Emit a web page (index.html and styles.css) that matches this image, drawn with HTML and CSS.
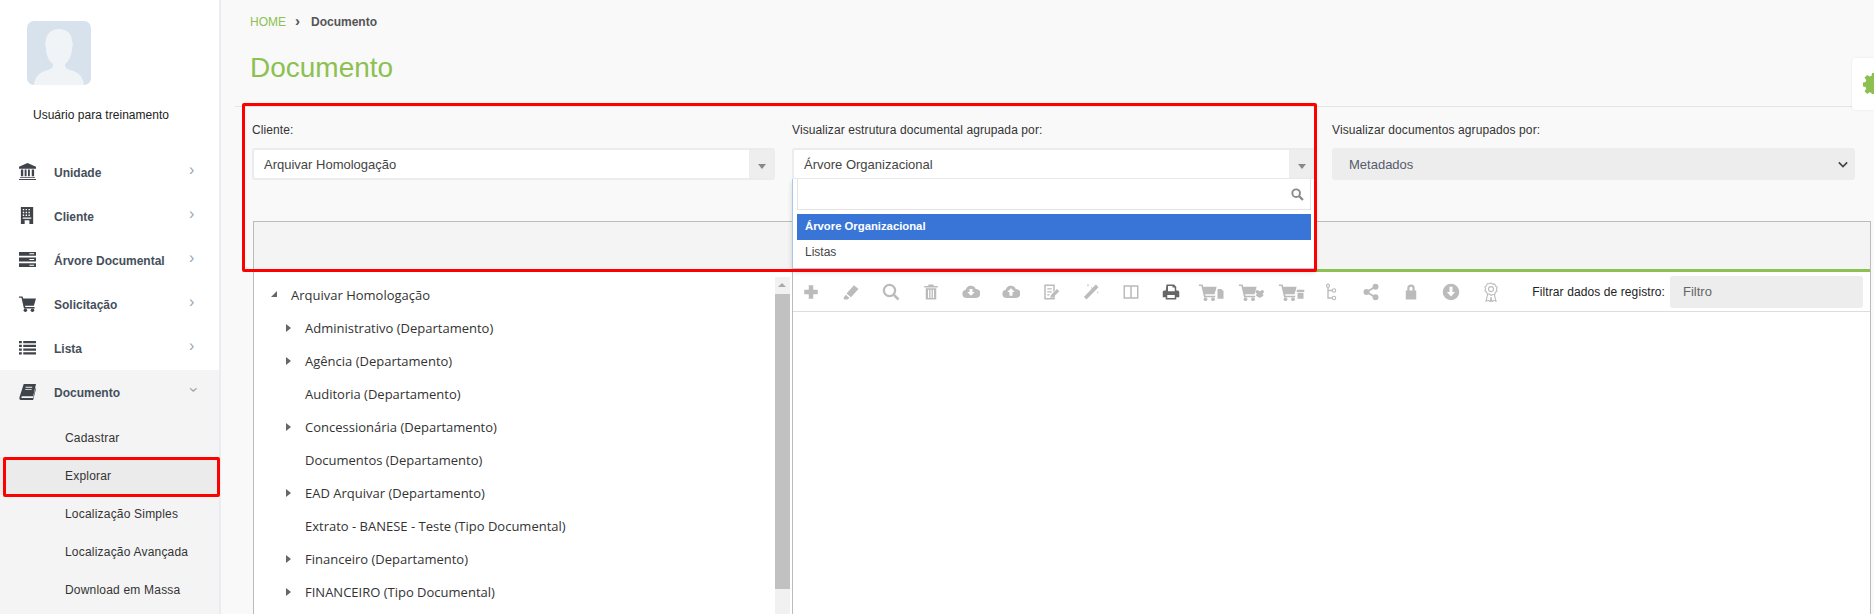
FILE: index.html
```html
<!DOCTYPE html>
<html lang="pt-BR">
<head>
    <meta charset="UTF-8">
    <title>Documento</title>
    <link rel="stylesheet" href="styles.css">
</head>
<body>
<svg class="defs" width="0" height="0">
    <symbol id="cart" viewBox="0 0 24 24">
        <path d="M0 2h5l1 3h18l-3 10H8.500l.5 2h13v2H7L3.500 4H0z"/>
        <circle cx="9" cy="21.500" r="2.500"/><circle cx="19" cy="21.500" r="2.500"/>
    </symbol>
</svg>
<div class="app">
    <aside class="sidebar">
        <div class="avatar">
            <svg viewBox="0 0 64 64" width="64" height="64">
                <path class="avatar-person" d="M7 64c1-9 6-13 14-15 4-1 5-3 5-6-4-3-7-9-7-16-1-2-1-5 0-7 0-7 5-12 13-12s13 5 13 12c1 2 1 5 0 7 0 7-3 13-7 16 0 3 1 5 5 6 8 2 13 6 14 15z"/>
            </svg>
        </div>
        <p class="user-name">Usuário para treinamento</p>
        <ul class="menu">
            <li class="menu-item">
                <svg class="menu-icon" viewBox="0 0 18 18"><path d="M9 0l9 4v2H0V4zM2 7h2.500v7H2zm4 0h2v7H6zm3.500 0h2v7h-2zM13.500 7H16v7h-2.500zM1 15h16v1H1zM0 17h18v1H0z"/></svg>
                <span class="menu-label">Unidade</span><span class="chev">&#8250;</span>
            </li>
            <li class="menu-item">
                <svg class="menu-icon" viewBox="0 0 18 18"><path fill-rule="evenodd" d="M2 0h13v18H2zm2 2v1.500h1.500V2zm3 0v1.500h1.500V2zm3 0v1.500h1.500V2zM4 5v1.500h1.500V5zm3 0v1.500h1.500V5zm3 0v1.500h1.500V5zM4 8v1.500h1.500V8zm3 0v1.500h1.500V8zm3 0v1.500h1.500V8zM4 11v1.500h9V11zM6 14v4h5v-4z"/></svg>
                <span class="menu-label">Cliente</span><span class="chev">&#8250;</span>
            </li>
            <li class="menu-item">
                <svg class="menu-icon" viewBox="0 0 18 18"><path fill-rule="evenodd" d="M0 1h18v4H0zm0 6h18v4H0zm0 6h18v4H0zm11-10.500v1h5v-1zm0 6v1h5v-1zm0 6v1h5v-1z"/></svg>
                <span class="menu-label">Árvore Documental</span><span class="chev">&#8250;</span>
            </li>
            <li class="menu-item">
                <svg class="menu-icon" viewBox="0 0 24 24"><use href="#cart"/></svg>
                <span class="menu-label">Solicitação</span><span class="chev">&#8250;</span>
            </li>
            <li class="menu-item">
                <svg class="menu-icon" viewBox="0 0 18 18"><path d="M0 2h3v2.500H0zm4.500 0H18v2.500H4.500zM0 6h3v2.500H0zm4.500 0H18v2.500H4.500zM0 10h3v2.500H0zm4.500 0H18v2.500H4.500zM0 14h3v2.500H0zm4.500 0H18v2.500H4.500z"/></svg>
                <span class="menu-label">Lista</span><span class="chev">&#8250;</span>
            </li>
            <li class="menu-group">
                <div class="menu-item">
                    <svg class="menu-icon" viewBox="0 0 18 18"><path fill-rule="evenodd" d="M5 1h13l-3 13H4c-1 0-1.500.5-1.500 1S3 16 4 16h11l2.500-11 .5 1-3 12H3c-2 0-3-1-2.500-3zm2 3v1h7V4zm-.5 2.500v1h7v-1z"/></svg>
                    <span class="menu-label">Documento</span><span class="chev chev-open">&#8250;</span>
                </div>
                <a class="sub-item">Cadastrar</a>
                <a class="sub-item sub-active">Explorar</a>
                <a class="sub-item">Localização Simples</a>
                <a class="sub-item">Localização Avançada</a>
                <a class="sub-item">Download em Massa</a>
            </li>
        </ul>
    </aside>

    <main class="content">
        <div class="breadcrumb"><a>HOME</a><span class="crumb-sep">&#8250;</span><b>Documento</b></div>
        <h1 class="page-title">Documento</h1>
        <div class="form-row">
            <div class="field">
                <label>Cliente:</label>
                <div class="chosen"><span>Arquivar Homologação</span><i class="chosen-arrow"></i></div>
            </div>
            <div class="field">
                <label>Visualizar estrutura documental agrupada por:</label>
                <div class="chosen"><span>Árvore Organizacional</span><i class="chosen-arrow"></i></div>
                <div class="chosen-drop">
                    <div class="chosen-search">
                        <svg viewBox="0 0 24 24" width="13" height="13"><circle cx="9.500" cy="9.500" r="7" fill="none" stroke="#888" stroke-width="3.500"/><path d="M15 15l7 7" stroke="#888" stroke-width="4"/></svg>
                    </div>
                    <div class="chosen-option chosen-current">Árvore Organizacional</div>
                    <div class="chosen-option">Listas</div>
                </div>
            </div>
            <div class="field">
                <label>Visualizar documentos agrupados por:</label>
                <div class="plain-select">
                    <span>Metadados</span>
                    <svg viewBox="0 0 12 8" width="10" height="7"><path d="M1 1.500l5 5 5-5" fill="none" stroke="#444" stroke-width="2"/></svg>
                </div>
            </div>
        </div>

        <section class="panel">
            <div class="panel-head"></div>
            <div class="panel-body">
                <div class="tree-col">
                    <ul class="tree">
                        <li class="tree-root"><i class="tw tw-open"></i>Arquivar Homologação</li>
                        <li class="tree-node"><i class="tw"></i>Administrativo (Departamento)</li>
                        <li class="tree-node"><i class="tw"></i>Agência (Departamento)</li>
                        <li class="tree-node"><i class="tw tw-none"></i>Auditoria (Departamento)</li>
                        <li class="tree-node"><i class="tw"></i>Concessionária (Departamento)</li>
                        <li class="tree-node"><i class="tw tw-none"></i>Documentos (Departamento)</li>
                        <li class="tree-node"><i class="tw"></i>EAD Arquivar (Departamento)</li>
                        <li class="tree-node"><i class="tw tw-none"></i>Extrato - BANESE - Teste (Tipo Documental)</li>
                        <li class="tree-node"><i class="tw"></i>Financeiro (Departamento)</li>
                        <li class="tree-node"><i class="tw"></i>FINANCEIRO (Tipo Documental)</li>
                    </ul>
                    <div class="scrollbar"><i class="scroll-up"></i><div class="scroll-thumb"></div></div>
                </div>
                <div class="grid-col">
                    <div class="toolbar">
                        <span class="tool"><svg viewBox="0 0 24 24"><path d="M9 3h6v6h6v6h-6v6H9v-6H3V9h6z"/></svg></span>
                        <span class="tool"><svg viewBox="0 0 24 24"><path d="M16 3l6 5-10 11-6-5zM5 15.500L10 20l-3 2H3l-1-2z"/></svg></span>
                        <span class="tool"><svg viewBox="0 0 24 24"><circle cx="10" cy="10" r="7.500" fill="none" stroke="#bbb" stroke-width="3"/><path d="M15.500 15.500L22 22" stroke="#bbb" stroke-width="3.500"/></svg></span>
                        <span class="tool"><svg viewBox="0 0 24 24"><path fill-rule="evenodd" d="M9 2h6l1 2h5v2H3V4h5zM5 7h14v15H5zm3 2v11h1.500V9zm3.300 0v11h1.500V9zm3.200 0v11H16V9z"/></svg></span>
                        <span class="tool"><svg viewBox="0 0 24 24"><path d="M19 20H6a5.500 5.500 0 0 1-1-10.900A7 7 0 0 1 18.300 8 6 6 0 0 1 19 20z"/><path class="cut" d="M10 8h4v4h3l-5 5-5-5h3z"/></svg></span>
                        <span class="tool"><svg viewBox="0 0 24 24"><path d="M19 20H6a5.500 5.500 0 0 1-1-10.900A7 7 0 0 1 18.300 8 6 6 0 0 1 19 20z"/><path class="cut" d="M12 7l5 5h-3v5h-4v-5H7z"/></svg></span>
                        <span class="tool"><svg viewBox="0 0 24 24"><path fill-rule="evenodd" d="M3 2h14v8l-2 2V4H5v16h10v-2l2-2v6H3zm4 5h6v1.500H7zm0 4h6v1.500H7zm0 4h3v1.500H7z"/><path d="M20 8l3 3-8 8-4 1 1-4z"/></svg></span>
                        <span class="tool"><svg viewBox="0 0 24 24"><path d="M18.500 2l3.500 3.500L6 22l-3.500-3.500z"/><path d="M8 1l1 2-1 2-1-2zM13 5l.8 1.500L13 8l-.8-1.500zM21 11l.8 1.500-.8 1.500-.8-1.500z"/></svg></span>
                        <span class="tool"><svg viewBox="0 0 24 24"><path fill-rule="evenodd" d="M2 3h20v18H2zm2 2v14h7V5zm9 0v14h7V5z"/></svg></span>
                        <span class="tool tool-print"><svg viewBox="0 0 24 24"><path fill-rule="evenodd" d="M6 2h10l3 3v5h2c1 0 2 1 2 2v7h-4v3H5v-3H1v-7c0-1 1-2 2-2h2zm2 2v7h9V6h-3V4zM7 16v4h10v-4z"/></svg></span>
                        <span class="tool"><svg viewBox="0 0 34 24" class="wide"><use href="#cart" width="24" height="24"/><path d="M25 8h5l3 3v10h-8z"/></svg></span>
                        <span class="tool"><svg viewBox="0 0 34 24" class="wide"><use href="#cart" width="24" height="24"/><path d="M24 9l4 2 4-2 2 3-2 2 1 3-5 3-5-3 1-3-2-2z"/></svg></span>
                        <span class="tool"><svg viewBox="0 0 34 24" class="wide"><use href="#cart" width="24" height="24"/><path d="M24 9h10v3H24zm1 4h8v8h-8z"/></svg></span>
                        <span class="tool"><svg viewBox="0 0 24 24"><path d="M8 2v18h6M8 10h6" fill="none" stroke="#bbb" stroke-width="1.800"/><circle cx="8" cy="3.500" r="2" fill="#fff" stroke="#bbb" stroke-width="1.500"/><circle cx="16" cy="10" r="2.300" fill="#fff" stroke="#bbb" stroke-width="1.500"/><circle cx="16" cy="20" r="2.300" fill="#fff" stroke="#bbb" stroke-width="1.500"/></svg></span>
                        <span class="tool"><svg viewBox="0 0 24 24"><circle cx="18" cy="5" r="4"/><circle cx="6" cy="12" r="4"/><circle cx="18" cy="19" r="4"/><path d="M18 5L6 12l12 7" fill="none" stroke="#bbb" stroke-width="2.500"/></svg></span>
                        <span class="tool"><svg viewBox="0 0 24 24"><path fill-rule="evenodd" d="M7 10V7a5 5 0 0 1 10 0v3h2v12H5V10zm3 0h4V7a2 2 0 0 0-4 0z"/></svg></span>
                        <span class="tool"><svg viewBox="0 0 24 24"><circle cx="12" cy="12" r="11"/><path class="cut" d="M10 5h4v7h3.500L12 18l-5.500-6H10z"/></svg></span>
                        <span class="tool"><svg viewBox="0 0 24 24" class="tall"><path d="M12 1l2 1.500h2.500l.8 2.300 2 1.500-.8 2.400.8 2.300-2 1.500-.8 2.400H14L12 16l-2-1.600H7.500l-.8-2.400-2-1.500.8-2.300-.8-2.400 2-1.500.8-2.300H10zM8 15l-2 8 3-1 2 2 1-6 1 6 2-2 3 1-2-8" fill="none" stroke="#bbb" stroke-width="1.300"/><circle cx="12" cy="8.500" r="3" fill="none" stroke="#bbb" stroke-width="1.300"/></svg></span>
                        <label class="filter-label">Filtrar dados de registro:</label>
                        <div class="filter-input">Filtro</div>
                    </div>
                </div>
            </div>
        </section>
    </main>
</div>

<div class="settings-tab">
    <svg viewBox="0 0 24 24" width="22" height="22"><path d="M10 1h4l.7 3.200 2 .8L19.500 3.300l2.800 2.800L20.500 8.900l.8 2 3.200.7v4l-3.200.7-.8 2 1.800 2.800-2.800 2.800-2.800-1.800-2 .8-.7 3.200h-4l-.7-3.200-2-.8-2.800 1.800-2.800-2.800 1.800-2.800-.8-2L-.5 15.600v-4l3.200-.7.800-2L1.700 6.100l2.800-2.800 2.800 1.700 2-.8z"/></svg>
</div>
<div class="mark mark-form"></div>
<div class="mark mark-menu"></div>
</body>
</html>
```

FILE: styles.css
```css
*{
    box-sizing: border-box;
}
html,body{
    margin: 0;
    height: 100%;
    overflow: hidden;
}
body{
    font-family: "Liberation Sans", Arial, sans-serif;
    font-size: 12px;
    color: #333;
    background: #f9f9f9;
}
ul{
    list-style: none;
    margin: 0;
    padding: 0;
}
.defs{
    position: absolute;
}
.app{
    display: flex;
    height: 614px;
    overflow: hidden;
}

/*menu lateral*/
.sidebar{
    width: 221px;
    flex: none;
    background: #fff;
    border-right: 2px solid #e9edf1;
    padding-top: 21px;
}
.avatar{
    width: 64px;
    height: 64px;
    margin-left: 27px;
    background: #d8e2ec;
    border-radius: 7px;
    overflow: hidden;
}
.avatar svg{
    display: block;
}
.avatar-person{
    fill: #f1f4f7;
}
.user-name{
    margin: 22px 0 0;
    height: 43px;
    line-height: 17px;
    text-align: center;
    color: #222;
    padding-right: 17px;
    letter-spacing: .03px;
}
.menu-item{
    display: flex;
    align-items: center;
    height: 44px;
    padding-left: 19px;
    font-weight: bold;
    color: #454f5b;
}
.menu-icon{
    width: 17px;
    height: 17px;
    fill: #3f434a;
    flex: none;
    margin-top: -2px;
}
.menu-label{
    margin-left: 18px;
    padding-top: 1px;
    flex: 1;
}
.chev{
    width: 10px;
    margin-right: 20px;
    color: #a0a6ad;
    font-size: 16px;
    font-weight: normal;
    line-height: 16px;
    margin-top: -4px;
}
.chev-open{
    transform: rotate(90deg);
    margin-top: 0;
}
.menu-group{
    background: #f4f4f4;
    height: 244px;
}
.menu-group .menu-item{
    margin-bottom: 5px;
}
.sub-item{
    display: block;
    height: 38px;
    line-height: 38px;
    padding-left: 65px;
    color: #333;
    letter-spacing: .2px;
}
.sub-active{
    background: #ebebeb;
}

/*conteudo*/
.content{
    flex: 1;
    min-width: 0;
    height: 614px;
    overflow: hidden;
}
.breadcrumb{
    height: 42px;
    line-height: 42px;
    padding-left: 29px;
    font-size: 12px;
    color: #555;
}
.breadcrumb a{
    color: #8cc152;
}
.crumb-sep{
    margin: 0 11px 0 9px;
    font-size: 15px;
    font-weight: bold;
}
.page-title{
    margin: 0 0 0 14px;
    height: 65px;
    padding-left: 15px;
    border-bottom: 1px solid #e5e5e5;
    font-size: 28px;
    font-weight: normal;
    line-height: 52px;
    color: #8cc152;
}
.form-row{
    display: flex;
    gap: 17px;
    padding: 15px 19px 0 31px;
    height: 114px;
}
.field{
    flex: 1;
    min-width: 0;
    position: relative;
}
.field label{
    display: block;
    height: 26px;
    line-height: 17px;
    color: #333;
    letter-spacing: .1px;
}
.chosen{
    display: flex;
    align-items: center;
    height: 32px;
    border: 2px solid #e9edef;
    border-radius: 3px;
    background: #fff;
    padding-left: 10px;
    font-size: 13px;
    color: #444;
}
.chosen span{
    flex: 1;
}
.chosen-arrow{
    align-self: stretch;
    width: 24px;
    background: #eee;
    position: relative;
}
.chosen-arrow::after{
    content: "";
    position: absolute;
    left: 9px;
    top: 14px;
    border: 4px solid transparent;
    border-top: 5px solid #888;
    border-bottom: 0;
}
.chosen-drop{
    position: absolute;
    left: 0;
    right: 0;
    top: 57px;
    height: 90px;
    background: #fff;
    border: 1px solid #a6c8ec;
    border-top: 0;
    padding: 0 3px 0 4px;
    z-index: 5;
    box-shadow: 0 3px 5px rgba(0,0,0,.15);
}
.chosen-search{
    display: flex;
    align-items: center;
    justify-content: flex-end;
    height: 31px;
    border: 1px solid #e4e4e4;
    border-top: 0;
    padding-right: 6px;
    margin-bottom: 4px;
}
.chosen-option{
    height: 26px;
    line-height: 25px;
    padding-left: 8px;
    font-size: 12px;
    color: #444;
}
.chosen-current{
    background: #3875d7;
    color: #fff;
    font-weight: bold;
    font-size: 11.3px;
}
.plain-select{
    display: flex;
    align-items: center;
    justify-content: space-between;
    height: 32px;
    background: #ededed;
    border: 1px solid #e9edef;
    border-radius: 3px;
    padding: 0 6px 0 16px;
    font-size: 13px;
    color: #555c6b;
}

/*painel*/
.panel{
    margin: 0 3px 0 32px;
    height: 393px;
    background: #fff;
    border: 1px solid #bbb;
    border-bottom: 0;
}
.panel-head{
    height: 50px;
    background: #f4f4f4;
    border-bottom: 3px solid #8cc152;
}
.panel-body{
    display: flex;
    height: 342px;
}
.tree-col{
    width: 539px;
    flex: none;
    display: flex;
    border-right: 1px solid #bbb;
    padding-right: 2px;
}
.tree{
    flex: 1;
    padding-top: 7px;
    font-family: "Open Sans", sans-serif;
    font-size: 13px;
    color: #333;
}
.tree li{
    height: 33px;
    line-height: 33px;
    white-space: nowrap;
    display: flex;
    align-items: center;
}
.tree-root{
    padding-left: 17px;
}
.tree-node{
    padding-left: 32px;
}
.tw{
    width: 19px;
    flex: none;
    height: 10px;
    position: relative;
}
.tree-root .tw{
    width: 20px;
}
.tw::before{
    content: "";
    position: absolute;
    left: 0;
    top: 0;
    border: 4px solid transparent;
    border-left: 5px solid #666;
    border-right: 0;
}
.tw-open::before{
    border: 0;
    border-bottom: 6px solid #666;
    border-left: 6px solid transparent;
}
.tw-none::before{
    display: none;
}
.scrollbar{
    width: 15px;
    flex: none;
    margin-top: 5px;
    background: #f1f1f1;
    position: relative;
}
.scroll-up{
    display: block;
    height: 17px;
    position: relative;
}
.scroll-up::after{
    content: "";
    position: absolute;
    left: 3px;
    top: 6px;
    border: 4px solid transparent;
    border-bottom: 4px solid #aaa;
    border-top: 0;
}
.scroll-thumb{
    height: 295px;
    background: #c1c1c1;
}
.grid-col{
    flex: 1;
    min-width: 0;
}
.toolbar{
    display: flex;
    align-items: center;
    gap: 4px;
    height: 40px;
    border-bottom: 1px solid #ddd;
    padding-right: 7px;
}
.tool{
    width: 36px;
    flex: none;
    display: flex;
    justify-content: center;
}
.tool svg{
    width: 18px;
    height: 18px;
    fill: #bbb;
}
.tool svg.wide{
    width: 27px;
}
.tool svg.tall{
    width: 20px;
    height: 20px;
}
.tool .cut{
    fill: #fff;
}
.tool-print svg{
    fill: #666;
}
.filter-label{
    margin-left: auto;
    margin-right: 1px;
    color: #222;
    white-space: nowrap;
    letter-spacing: .1px;
}
.filter-input{
    width: 193px;
    height: 32px;
    line-height: 32px;
    background: #ededed;
    border-radius: 3px;
    padding-left: 13px;
    font-size: 13px;
    color: #666;
}

/*aba de configuracao*/
.settings-tab{
    position: absolute;
    left: 1852px;
    top: 58px;
    width: 22px;
    height: 52px;
    background: #fff;
    border-radius: 4px 0 0 4px;
    box-shadow: 0 0 3px rgba(0,0,0,.08);
    padding: 14px 0 0 11px;
    overflow: hidden;
}
.settings-tab svg{
    fill: #8cc152;
}

/*marcacoes vermelhas do print*/
.mark{
    position: absolute;
    border: 3px solid #f00;
    border-radius: 2px;
    z-index: 10;
}
.mark-form{
    left: 242px;
    top: 103px;
    width: 1075px;
    height: 169px;
}
.mark-menu{
    left: 3px;
    top: 457px;
    width: 217px;
    height: 40px;
}
```
